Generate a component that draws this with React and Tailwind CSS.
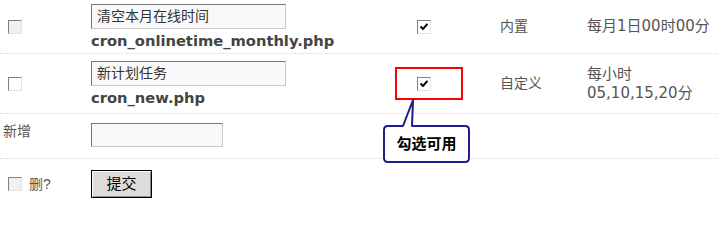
import React from "react";

const font = { fontFamily: '"Liberation Sans", "Noto Sans CJK SC", sans-serif' };

function Box({ checked = false, dim = false }) {
  return (
    <div
      className={`w-[14px] h-[14px] border border-t-[#808080] border-l-[#808080] border-b-[#e3e3e3] border-r-[#e3e3e3] flex items-center justify-center ${
        dim ? "bg-[#f0f0f0]" : "bg-white"
      }`}
    >
      {checked && (
        <svg width="8" height="7" viewBox="0 0 8 7">
          <path d="M0.5 3.5 L3 6 L7.5 0.8" fill="none" stroke="#000" strokeWidth="2" />
        </svg>
      )}
    </div>
  );
}

function TextBox({ value = "", width = "w-[195px]", height = "h-[25px]" }) {
  return (
    <div
      className={`${width} ${height} border border-t-[#777] border-l-[#777] border-b-[#cacaca] border-r-[#cacaca] bg-[#f9f9f9] pl-[5px] text-[14px] leading-[23px] text-[#333]`}
    >
      {value}
    </div>
  );
}

const rows = [
  {
    name: "清空本月在线时间",
    file: "cron_onlinetime_monthly.php",
    dim: true,
    type: "内置",
    time: ["每月1日00时00分"],
    h: "h-[54px]",
  },
  {
    name: "新计划任务",
    file: "cron_new.php",
    dim: false,
    type: "自定义",
    time: ["每小时", "05,10,15,20分"],
    h: "h-[60px]",
  },
];

export default function App() {
  return (
    <div className="relative w-[718px] h-[213px] bg-white text-[14px] text-[#555]" style={font}>
      {rows.map((r) => (
        <div
          key={r.file}
          className={`flex items-center ${r.h} border-b border-dotted border-[#c6def0]`}
        >
          <div className="w-[91px] pl-[8px]">
            <Box dim={r.dim} />
          </div>
          <div className="w-[289px] flex flex-col">
            <TextBox value={r.name} />
            <div
              className="mt-[3px] text-[14.7px] leading-[18px] font-bold text-[#444]"
              style={{ fontFamily: '"DejaVu Sans", sans-serif' }}
            >
              {r.file}
            </div>
          </div>
          <div className="w-[88px] flex justify-center">
            <Box checked />
          </div>
          <div className="w-[119px] pl-[32px]">{r.type}</div>
          <div
            className="flex-1 flex flex-col text-[15px] leading-[19px]"
            style={{ fontFamily: '"DejaVu Sans", "Noto Sans CJK SC", sans-serif' }}
          >
            {r.time.map((t) => (
              <span key={t}>{t}</span>
            ))}
          </div>
        </div>
      ))}

      <div className="flex items-start h-[45px] border-b border-dotted border-[#c6def0]">
        <div className="w-[91px] pl-[3px] pt-[7px] leading-[20px]">新增</div>
        <div className="pt-[9px]">
          <TextBox width="w-[132px]" height="h-[24px]" />
        </div>
      </div>

      <div className="flex items-center h-[50px]">
        <div className="w-[91px] pl-[8px] flex items-center gap-[7px]">
          <Box dim />
          <span>删?</span>
        </div>
        <button className="w-[61px] h-[28px] bg-[#dcdcdc] border border-black shadow-[inset_1px_1px_0_#fff,inset_-1px_-1px_0_#8a8a8a] text-[15px] text-black">
          提交
        </button>
      </div>

      {/* highlight + callout */}
      <div className="absolute left-[395px] top-[67px] w-[68px] h-[33px] border-2 border-[#ff0000]" />
      <svg
        className="absolute left-[380px] top-[98px]"
        width="92"
        height="67"
        viewBox="0 0 92 67"
      >
        <path
          d="M8 28 H23 L33 2 L32 28 H85 Q89 28 89 32 V60 Q89 64 85 64 H8 Q4 64 4 60 V32 Q4 28 8 28 Z"
          fill="#fff"
          stroke="#1c1c8c"
          strokeWidth="2"
          strokeLinejoin="round"
        />
      </svg>
      <div className="absolute left-[383px] top-[126px] w-[87px] h-[37px] flex items-center justify-center text-[15px] font-bold text-black">
        勾选可用
      </div>
    </div>
  );
}
